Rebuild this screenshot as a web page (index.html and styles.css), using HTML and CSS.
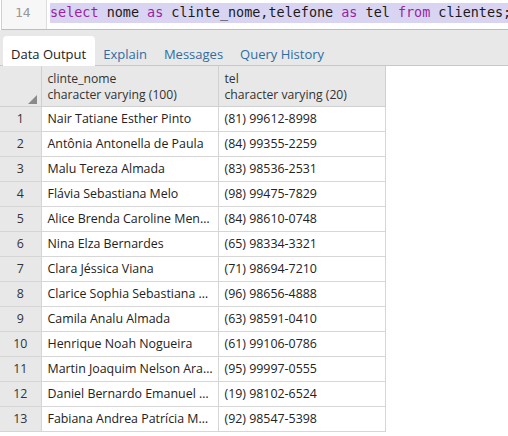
FILE: index.html
```html
<!DOCTYPE html>
<html>
<head>
<meta charset="utf-8">
<link rel="stylesheet" href="styles.css">
</head>
<body>
<div class="editor">
  <div class="gutter">14</div>
  <div class="code"><span class="sel"><span class="kw">select</span> nome <span class="kw">as</span> clinte_nome,telefone <span class="kw">as</span> tel <span class="kw">from</span> clientes;</span></div>
</div>
<div class="tabs">
  <div class="tab active">Data Output</div>
  <div class="tab">Explain</div>
  <div class="tab">Messages</div>
  <div class="tab">Query History</div>
</div>
<table class="grid">
  <colgroup><col class="c-num"><col class="c-name"><col class="c-tel"></colgroup>
  <thead>
    <tr>
      <th class="corner"><span class="tri"></span></th>
      <th>clinte_nome<br>character varying (100)</th>
      <th>tel<br>character varying (20)</th>
    </tr>
  </thead>
  <tbody>
    <tr><td class="num">1</td><td>Nair Tatiane Esther Pinto</td><td>(81) 99612-8998</td></tr>
    <tr><td class="num">2</td><td>Antônia Antonella de Paula</td><td>(84) 99355-2259</td></tr>
    <tr><td class="num">3</td><td>Malu Tereza Almada</td><td>(83) 98536-2531</td></tr>
    <tr><td class="num">4</td><td>Flávia Sebastiana Melo</td><td>(98) 99475-7829</td></tr>
    <tr><td class="num">5</td><td>Alice Brenda Caroline Mendes</td><td>(84) 98610-0748</td></tr>
    <tr><td class="num">6</td><td>Nina Elza Bernardes</td><td>(65) 98334-3321</td></tr>
    <tr><td class="num">7</td><td>Clara Jéssica Viana</td><td>(71) 98694-7210</td></tr>
    <tr><td class="num">8</td><td>Clarice Sophia Sebastiana Rocha</td><td>(96) 98656-4888</td></tr>
    <tr><td class="num">9</td><td>Camila Analu Almada</td><td>(63) 98591-0410</td></tr>
    <tr><td class="num">10</td><td>Henrique Noah Nogueira</td><td>(61) 99106-0786</td></tr>
    <tr><td class="num">11</td><td>Martin Joaquim Nelson Araújo</td><td>(95) 99997-0555</td></tr>
    <tr><td class="num">12</td><td>Daniel Bernardo Emanuel Barros</td><td>(19) 98102-6524</td></tr>
    <tr><td class="num">13</td><td>Fabiana Andrea Patrícia Martins</td><td>(92) 98547-5398</td></tr>
  </tbody>
</table>
</body>
</html>
```
FILE: styles.css
```css
html, body {
  margin: 0;
  padding: 0;
  background: #ffffff;
  overflow: hidden;
}
body {
  font-family: "Open Sans", "Liberation Sans", sans-serif;
  width: 508px;
  height: 436px;
}
.editor {
  display: flex;
  margin-left: 1px;
  border-left: 1px solid #d0d0d0;
  border-bottom: 1px solid #bdbdbd;
  box-sizing: border-box;
  height: 30px;
}
.gutter {
  width: 45px;
  background: #f7f7f7;
  border-right: 1px solid #dddddd;
  font-family: "DejaVu Sans Mono", monospace;
  font-size: 13px;
  color: #999999;
  padding: 5px 0 0 13px;
  box-sizing: border-box;
  line-height: 16px;
}
.code {
  flex: 1;
  padding: 3px 0 0 3px;
  white-space: nowrap;
  overflow: hidden;
  font-family: "DejaVu Sans Mono", monospace;
  font-size: 13.45px;
  color: #1a1a1a;
}
.sel {
  display: inline-block;
  background: #d8d4f2;
  line-height: 20px;
  padding-right: 10px;
}
.kw { color: #9b1fa0; }
.tabs {
  display: flex;
  background: #e8e8e8;
  height: 36px;
  padding: 6px 0 0 3px;
  box-sizing: border-box;
  border-bottom: 1px solid #c8c8c8;
}
.tab {
  font-size: 13px;
  color: #2e6da4;
  padding: 9px 9px 0 8px;
  line-height: 18px;
}
.tab.active {
  background: #ffffff;
  color: #222222;
  border-radius: 4px 4px 0 0;
  margin-bottom: -1px;
}
.grid {
  border-collapse: collapse;
  table-layout: fixed;
  width: 385px;
  font-size: 12.4px;
}
.c-num { width: 41px; }
.c-name { width: 177px; }
.c-tel { width: 167px; }
.grid th {
  background: #e8e8e8;
  font-weight: normal;
  text-align: left;
  color: #333333;
  height: 40px;
  padding: 5px 6px 2px 6px;
  box-sizing: border-box;
  line-height: 16px;
  font-size: 12.2px;
  border-right: 1px solid #d0d0d0;
  border-bottom: 1px solid #d0d0d0;
  vertical-align: middle;
}
.grid th.corner {
  text-align: right;
  vertical-align: bottom;
  padding: 0 4px 2px 0;
}
.tri {
  display: inline-block;
  width: 0;
  height: 0;
  border-left: 9px solid transparent;
  border-bottom: 9px solid #8a8a8a;
  vertical-align: bottom;
}
.grid td {
  height: 25px;
  box-sizing: border-box;
  padding: 0 3px 0 6px;
  color: #222222;
  white-space: nowrap;
  overflow: hidden;
  text-overflow: ellipsis;
  border-right: 1px solid #d6d6d6;
  border-bottom: 1px solid #d6d6d6;
}
.grid td.num {
  background: #e8e8e8;
  text-align: center;
  color: #333333;
  padding: 0;
}
```
